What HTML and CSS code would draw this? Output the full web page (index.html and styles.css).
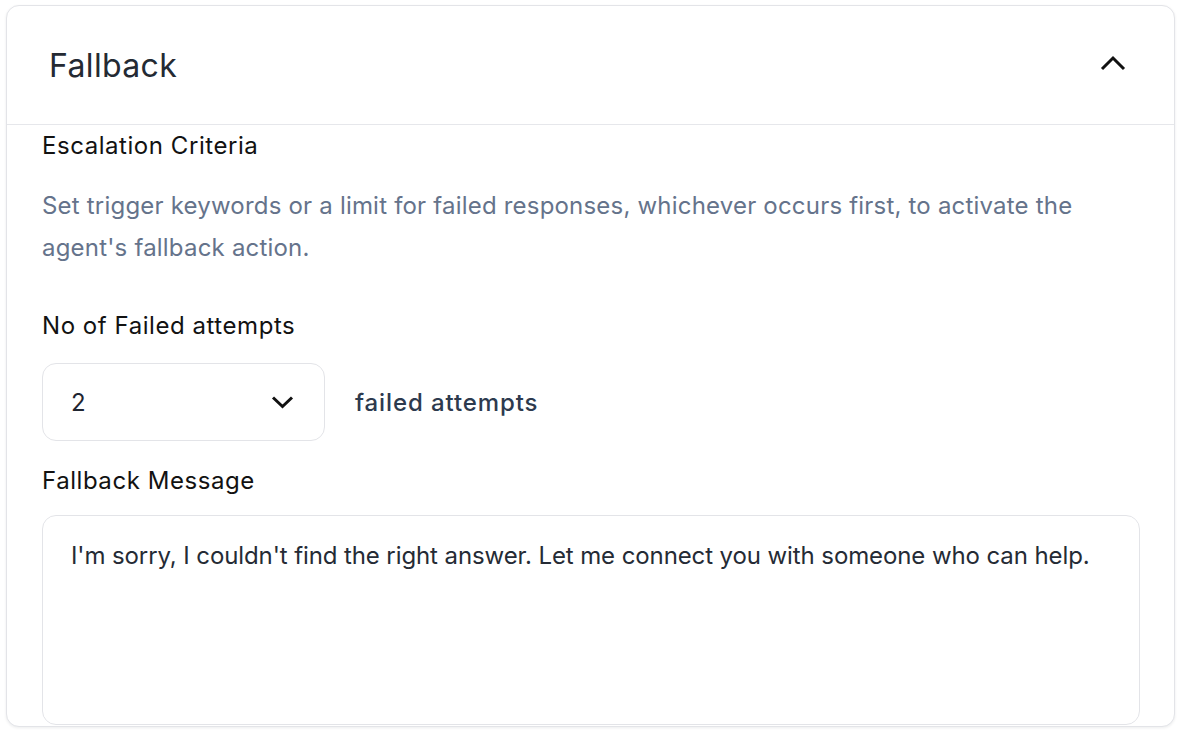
FILE: index.html
```html
<!DOCTYPE html>
<html lang="en">
<head>
<meta charset="utf-8">
<title>Fallback</title>
<link rel="stylesheet" href="styles.css">
</head>
<body>
<section class="card">
  <header class="card-header">
    <h2 class="card-title">Fallback</h2>
    <button class="icon-btn" aria-label="Collapse">
      <svg width="26" height="16" viewBox="0 0 26 16"><polyline points="2,14 13,3 24,14" fill="none" stroke="#111" stroke-width="3" stroke-linejoin="miter"/></svg>
    </button>
  </header>
  <div class="card-body">
    <h3 class="label">Escalation Criteria</h3>
    <p class="desc">Set trigger keywords or a limit for failed responses, whichever occurs first, to activate the agent's fallback action.</p>
    <h3 class="label label-attempts">No of Failed attempts</h3>
    <div class="attempts-row">
      <div class="select">
        <span class="select-value">2</span>
        <svg width="23" height="14" viewBox="0 0 23 14"><polyline points="2,2.5 11.5,11.5 21,2.5" fill="none" stroke="#111" stroke-width="3"/></svg>
      </div>
      <span class="attempts-text">failed attempts</span>
    </div>
    <h3 class="label label-message">Fallback Message</h3>
    <div class="textarea">I'm sorry, I couldn't find the right answer. Let me connect you with someone who can help.</div>
  </div>
</section>
</body>
</html>
```
FILE: styles.css
```css
* { box-sizing: border-box; }
html, body { margin: 0; padding: 0; background: #ffffff; }
body {
  font-family: Inter, "Noto Sans", "Liberation Sans", sans-serif;
  color: #111111;
  padding: 5px 6px 7px 6px;
}
.card {
  height: 722px;
  border: 1px solid #e3e4e8;
  border-radius: 13px;
  box-shadow: 0 1px 3px rgba(16, 24, 40, 0.08);
  overflow: hidden;
  background: #fff;
}
.card-header {
  height: 119px;
  display: flex;
  align-items: center;
  justify-content: space-between;
  padding: 0 48px 0 42px;
  border-bottom: 1px solid #e6e7eb;
}
.card-title {
  margin: 0;
  font-size: 32px;
  font-weight: 400;
  color: #242a33;
  letter-spacing: 0.35px;
}
.icon-btn {
  border: 0;
  background: none;
  padding: 0;
  display: flex;
  margin-top: -4px;
}
.card-body {
  padding: 6px 34px 0 35px;
}
.label {
  margin: 0;
  font-size: 24px;
  line-height: 30px;
  font-weight: 400;
  color: #121212;
  letter-spacing: 0.55px;
}
.desc {
  margin: 24px 0 0 0;
  font-size: 24px;
  line-height: 42px;
  color: #65738b;
  letter-spacing: 0.2px;
}
.label-attempts { margin-top: 42px; }
.attempts-row {
  display: flex;
  align-items: center;
  gap: 30px;
  margin-top: 22px;
}
.select {
  width: 283px;
  height: 78px;
  border: 1px solid #e3e4e8;
  border-radius: 14px;
  display: flex;
  align-items: center;
  justify-content: space-between;
  padding: 0 30px 0 28px;
}
.select-value {
  font-size: 24px;
  color: #1f2530;
}
.attempts-text {
  font-size: 24px;
  font-weight: 500;
  color: #2d3a4e;
  letter-spacing: 0.9px;
}
.label-message { margin-top: 25px; }
.textarea {
  margin-top: 19px;
  height: 210px;
  border: 1px solid #e3e4e8;
  border-radius: 14px;
  padding: 22px 28px;
  font-size: 24px;
  line-height: 36px;
  color: #252b35;
  letter-spacing: -0.1px;
}
```
